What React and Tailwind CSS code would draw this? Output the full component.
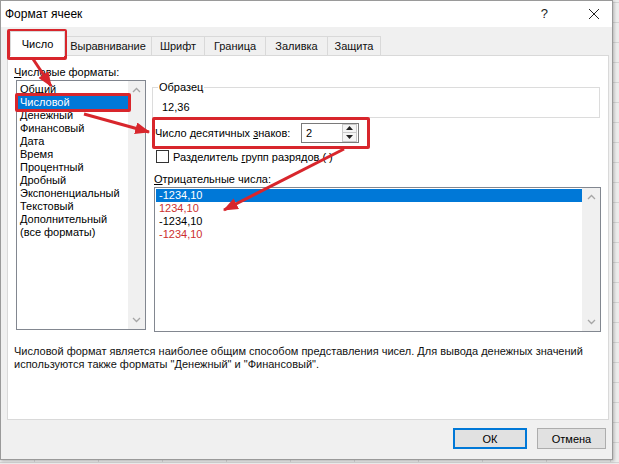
import React from "react";

const formats = [
  "Общий",
  "Числовой",
  "Денежный",
  "Финансовый",
  "Дата",
  "Время",
  "Процентный",
  "Дробный",
  "Экспоненциальный",
  "Текстовый",
  "Дополнительный",
  "(все форматы)",
];

const tabs = [
  { t: "Выравнивание", w: "w-[87px]" },
  { t: "Шрифт", w: "w-[53px]" },
  { t: "Граница", w: "w-[61px]" },
  { t: "Заливка", w: "w-[62px]" },
  { t: "Защита", w: "w-[53px]" },
];

function Up() {
  return (
    <svg width="9" height="6" viewBox="0 0 9 6">
      <path d="M1 5 L4.5 1.5 L8 5" fill="none" stroke="#a6a6a6" strokeWidth="1.3" />
    </svg>
  );
}
function Down() {
  return (
    <svg width="9" height="6" viewBox="0 0 9 6">
      <path d="M1 1 L4.5 4.5 L8 1" fill="none" stroke="#a6a6a6" strokeWidth="1.3" />
    </svg>
  );
}

export default function App() {
  const rows = Array.from({ length: 24 });
  const cols = Array.from({ length: 11 });
  return (
    <div className="relative w-[619px] h-[464px] overflow-hidden bg-[#ececec] font-['Liberation_Sans',sans-serif] text-[11px] leading-[14px] text-black whitespace-nowrap">
      {/* spreadsheet background */}
      <div className="flex flex-col -mt-[17px] -ml-[29px]">
        {rows.map((_, r) => (
          <div key={r} className="flex h-[20px] shrink-0">
            {cols.map((_, c) => (
              <div key={c} className="w-[64px] h-[20px] shrink-0 border-r border-b border-[#d4d4d4]" />
            ))}
          </div>
        ))}
      </div>

      {/* dialog */}
      <div className="absolute left-0 top-0 w-[613px] h-[460px] flex flex-col bg-[#f0f0f0] border border-[#9a9a9a] shadow-[1px_1px_3px_rgba(0,0,0,0.25)]">
        {/* title bar */}
        <div className="h-[26px] bg-white flex items-center pl-[4px] shrink-0">
          <span className="text-[12px]">Формат ячеек</span>
          <span className="ml-auto mr-[40px] text-[13px] text-[#222]">?</span>
          <svg width="12" height="12" viewBox="0 0 12 12" className="mr-[12px]">
            <path d="M1 1 L11 11 M11 1 L1 11" stroke="#222" strokeWidth="1" />
          </svg>
        </div>

        {/* tabs */}
        <div className="h-[28px] flex items-end pl-[9px] shrink-0">
          <div className="w-[55px] h-[25px] bg-white border border-b-0 border-[#d9d9d9] flex items-center justify-center -mb-px relative z-10">
            Число
          </div>
          {tabs.map((t) => (
            <div
              key={t.t}
              className={`${t.w} h-[19px] border border-l-0 border-b-0 border-[#d9d9d9] flex items-center justify-center text-[#111]`}
            >
              {t.t}
            </div>
          ))}
        </div>

        {/* panel */}
        <div className="ml-[6px] w-[602px] h-[365px] bg-white border border-[#d9d9d9] shrink-0 flex flex-col">
          <div className="flex">
            {/* left column */}
            <div className="flex flex-col pl-[6px] pt-[9px]">
              <div className="h-[14px]">
                <u>Ч</u>исловые форматы:
              </div>
              <div className="mt-[1px] ml-[2px] w-[130px] h-[250px] border border-[#828790] flex">
                <div className="flex-1 flex flex-col pt-[2px]">
                  {formats.map((f, i) =>
                    i === 1 ? (
                      <div key={f} className="h-[13px] leading-[13px] bg-[#0078d7] text-white pl-[3px]">
                        {f}
                      </div>
                    ) : (
                      <div key={f} className="h-[13px] leading-[13px] pl-[3px]">
                        {f}
                      </div>
                    )
                  )}
                </div>
                <div className="w-[17px] bg-[#f0f0f0] flex flex-col items-center justify-between py-[6px]">
                  <Up />
                  <Down />
                </div>
              </div>
            </div>

            {/* right column */}
            <div className="flex flex-col pl-[6px] pt-[9px]">
              <div className="relative mt-[22px] w-[448px] h-[31px] border border-[#dcdcdc]">
                <span className="absolute -top-[8px] left-[5px] bg-white px-[1px]">Образец</span>
                <div className="pl-[9px] pt-[12px]">12,36</div>
              </div>

              <div className="mt-[5px] h-[19px] flex items-center">
                <div className="w-[149px] pl-[3px]">
                  Число десятичных <u>з</u>наков:
                </div>
                <div className="w-[58px] h-[20px] border border-[#7a7a7a] flex items-center">
                  <span className="pl-[4px] flex-1">2</span>
                  <div className="w-[15px] h-[18px] flex flex-col mr-[1px]">
                    <div className="flex-1 border border-[#c9c9c9] bg-[#f5f5f5] flex items-center justify-center">
                      <svg width="7" height="4" viewBox="0 0 7 4">
                        <path d="M0 4 L3.5 0 L7 4 Z" fill="#222" />
                      </svg>
                    </div>
                    <div className="flex-1 border border-t-0 border-[#c9c9c9] bg-[#f5f5f5] flex items-center justify-center">
                      <svg width="7" height="4" viewBox="0 0 7 4">
                        <path d="M0 0 L3.5 4 L7 0 Z" fill="#222" />
                      </svg>
                    </div>
                  </div>
                </div>
              </div>

              <div className="mt-[8px] flex items-center h-[13px]">
                <div className="ml-[4px] w-[13px] h-[13px] border border-[#333] bg-white" />
                <span className="ml-[4px]">
                  Разделитель <u>г</u>рупп разрядов ( )
                </span>
              </div>

              <div className="mt-[9px] h-[14px] pl-[2px]">
                <u>О</u>трицательные числа:
              </div>
              <div className="mt-[1px] ml-[2px] w-[447px] h-[145px] border border-[#828790] flex">
                <div className="flex-1 flex flex-col pt-[1px] pl-[1px]">
                  <div className="h-[13px] leading-[13px] bg-[#0078d7] text-white pl-[3px]">-1234,10</div>
                  <div className="h-[13px] leading-[13px] text-[#cc2f2f] pl-[3px]">1234,10</div>
                  <div className="h-[13px] leading-[13px] pl-[3px]">-1234,10</div>
                  <div className="h-[13px] leading-[13px] text-[#cc2f2f] pl-[3px]">-1234,10</div>
                </div>
                <div className="w-[18px] bg-[#f0f0f0] flex flex-col items-center justify-between py-[6px]">
                  <Up />
                  <Down />
                </div>
              </div>
            </div>
          </div>

          <div className="mt-[13px] pl-[6px] leading-[13px] text-[#111]">
            <div>
              Числовой формат является наиболее общим способом представления чисел. Для вывода денежных значений
            </div>
            <div>используются также форматы "Денежный" и "Финансовый".</div>
          </div>
        </div>

        {/* footer */}
        <div className="flex justify-end gap-[10px] pt-[8px] pr-[6px]">
          <div className="w-[74px] h-[21px] bg-[#e1e1e1] border-2 border-[#0078d7] flex items-center justify-center">
            ОК
          </div>
          <div className="w-[69px] h-[21px] bg-[#e1e1e1] border border-[#adadad] flex items-center justify-center">
            Отмена
          </div>
        </div>
      </div>

      {/* red annotation boxes */}
      <div className="absolute left-[7px] top-[29px] w-[60px] h-[31px] border-[3px] border-[#d8262c] rounded-[2px]" />
      <div className="absolute left-[15px] top-[93px] w-[116px] h-[19px] border-[3px] border-[#d8262c] rounded-[2px]" />
      <div className="absolute left-[152px] top-[117px] w-[218px] h-[32px] border-[3px] border-[#d8262c] rounded-[2px]" />

      {/* arrows */}
      <svg className="absolute left-0 top-0 pointer-events-none" width="619" height="464" viewBox="0 0 619 464">
        <defs>
          <marker id="ah" markerWidth="5" markerHeight="4" refX="4.6" refY="2" orient="auto" markerUnits="strokeWidth">
            <path d="M0 0 L5 2 L0 4 Z" fill="#d8262c" />
          </marker>
        </defs>
        <line x1="33" y1="59" x2="51" y2="86" stroke="#d8262c" strokeWidth="3" markerEnd="url(#ah)" />
        <line x1="84" y1="114" x2="149" y2="132" stroke="#d8262c" strokeWidth="3" markerEnd="url(#ah)" />
        <line x1="344" y1="149" x2="224" y2="210" stroke="#d8262c" strokeWidth="3" markerEnd="url(#ah)" />
      </svg>
    </div>
  );
}
